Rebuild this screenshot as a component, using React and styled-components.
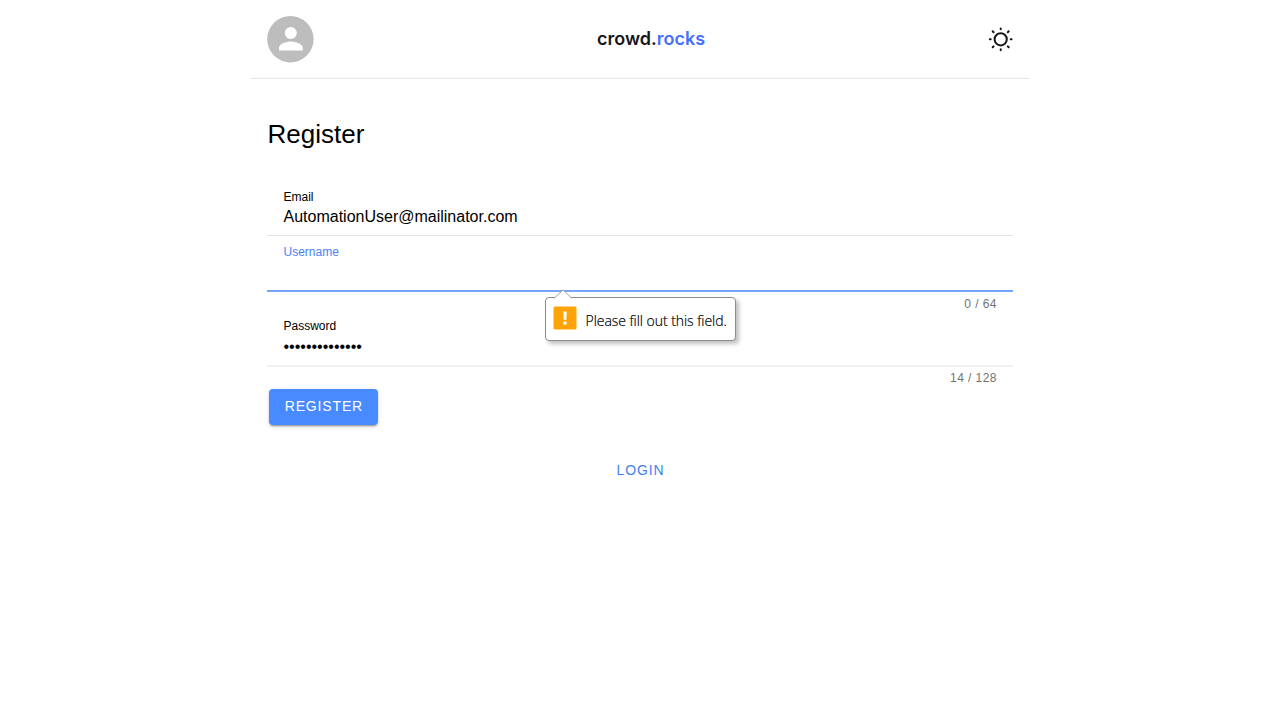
import React from 'react';
import styled, { createGlobalStyle } from 'styled-components';

const GlobalStyle = createGlobalStyle`
  *, *::before, *::after { box-sizing: border-box; }
  body {
    margin: 0;
    background: #fff;
    color: #000;
    font-family: "Liberation Sans", Arial, sans-serif;
  }
`;

const Page = styled.div`
  width: 778px;
  margin: 0 auto;
`;

const Header = styled.header`
  display: flex;
  align-items: center;
  justify-content: space-between;
  height: 79px;
  padding: 0 16px;
  border-bottom: 1px solid #e6e6ea;
`;

const Avatar = styled.svg`
  display: block;
  width: 47px;
  height: 47px;
`;

const Logo = styled.div`
  margin-left: -22px;
  padding-left: 22px;
  font: 600 18px/24px Inter, sans-serif;
  color: #16161a;
`;

const LogoAccent = styled.span`
  color: #476fff;
`;

const Sun = styled.svg`
  display: block;
  width: 25px;
  height: 25px;
`;

const Form = styled.main`
  display: flex;
  flex-direction: column;
  padding: 40px 16px 0;
`;

const Title = styled.h1`
  margin: 0 0 36px;
  padding-left: 0.6px;
  font-size: 26px;
  line-height: 30px;
  font-weight: 400;
`;

const borders = {
  normal: '1px solid #e4e4e4',
  soft: '2px solid #f1f1f1',
  focused: '2px solid #76a5fd',
};

const Field = styled.div`
  position: relative;
  height: ${(p) => p.$height}px;
  padding: ${(p) => p.$top}px 16px 0 16.5px;
  border-bottom: ${(p) => borders[p.$border || 'normal']};
`;

const Label = styled.div`
  font-size: 12px;
  line-height: 14px;
  color: ${(p) => (p.$focused ? '#4a80fb' : '#000')};
`;

const Value = styled.div`
  margin-top: ${(p) => p.$gap}px;
  font-size: 16px;
  line-height: 18px;
`;

const Counter = styled.div`
  height: ${(p) => p.$height}px;
  padding: ${(p) => p.$height - 14}px 16px 0;
  font-size: 12px;
  line-height: 14px;
  letter-spacing: 0.45px;
  text-align: right;
  color: #737373;
`;

const Tooltip = styled.div`
  position: absolute;
  z-index: 1;
  top: 61px;
  left: 278px;
  display: flex;
  align-items: center;
  width: 191px;
  height: 44px;
  padding: 0 7px;
  border: 1px solid #8c8c8c;
  border-radius: 4px;
  background: #fff;
  box-shadow: 3px 3px 4px rgba(0, 0, 0, 0.25);
`;

const TooltipArrow = styled.svg`
  position: absolute;
  top: -9px;
  left: 8px;
  width: 18px;
  height: 10px;
`;

const WarningIcon = styled.svg`
  flex: none;
  width: 24px;
  height: 24px;
  margin: -2px 8.5px 0 0;
`;

const TooltipText = styled.span`
  padding-top: 3px;
  font: 300 14px/20px "Open Sans", sans-serif;
  letter-spacing: -0.05px;
  white-space: nowrap;
  color: #000;
  -webkit-text-stroke: 0.2px #000;
`;

const RegisterButton = styled.button`
  align-self: flex-start;
  width: 109px;
  height: 36px;
  margin: 4px 2.4px;
  padding: 0 0 2px;
  border: 0;
  border-radius: 4px;
  background: #488aff;
  box-shadow: 0 3px 1px -2px rgba(0, 0, 0, 0.2), 0 2px 2px 0 rgba(0, 0, 0, 0.14), 0 1px 5px 0 rgba(0, 0, 0, 0.12);
  color: #fff;
  font: 400 14px/16px "Liberation Sans", Arial, sans-serif;
  letter-spacing: 0.84px;
`;

const LoginButton = styled.button`
  align-self: center;
  height: 36px;
  margin-top: 23px;
  padding: 0 15px 0 16px;
  border: 0;
  background: none;
  color: #4280f5;
  font: 400 14px/16px "Liberation Sans", Arial, sans-serif;
  letter-spacing: 0.84px;
`;

function ValidationTooltip({ children }) {
  return (
    <Tooltip role="alert">
      <TooltipArrow viewBox="0 0 18 10">
        <path d="M0.5 9 L9 0.9 L17.5 9 V10 H0.5 Z" fill="#fff" />
        <path d="M0.5 9 L9 0.9 L17.5 9" fill="none" stroke="#a0a0a0" />
      </TooltipArrow>
      <WarningIcon viewBox="0 0 24 24">
        <rect x="0.5" y="0.5" width="23" height="23" rx="1.5" fill="#ffa30a" />
        <path d="M10.3 5.5h3.4l-.3 8.2h-2.8z" fill="#fff" />
        <circle cx="12" cy="17.1" r="1.8" fill="#fff" />
      </WarningIcon>
      <TooltipText>{children}</TooltipText>
    </Tooltip>
  );
}

export default function App() {
  return (
    <>
      <GlobalStyle />
      <Page>
        <Header>
          <Avatar viewBox="0 0 47 47">
            <circle cx="23.4" cy="23.2" r="23.2" fill="#bdbdbd" />
            <circle cx="23.8" cy="17" r="6" fill="#fff" />
            <path d="M12 34.6v-3c0-4 7.8-6.2 11.8-6.2s11.9 2.2 11.9 6.2v3z" fill="#fff" />
          </Avatar>
          <Logo>crowd.<LogoAccent>rocks</LogoAccent></Logo>
          <Sun viewBox="0 0 25 25" fill="none" stroke="#161616" strokeWidth="2" strokeLinecap="round">
            <circle cx="12.7" cy="12.3" r="6.1" />
            <path d="M12.7 1.4v.9M12.7 22.3v.9M1.8 12.3h.9M22.7 12.3h.9M4.7 4.3l.9.9M19.8 19.4l.9.9M4.7 20.3l.9-.9M19.8 5.2l.9-.9" />
          </Sun>
        </Header>
        <Form>
          <Title>Register</Title>
          <Field $height={51} $top={5}>
            <Label>Email</Label>
            <Value $gap={4}>AutomationUser@mailinator.com</Value>
          </Field>
          <Field $height={56} $top={9} $border="focused">
            <Label $focused>Username</Label>
            <ValidationTooltip>Please fill out this field.</ValidationTooltip>
          </Field>
          <Counter $height={19}>0 / 64</Counter>
          <Field $height={56} $top={8} $border="soft">
            <Label>Password</Label>
            <Value $gap={5}>••••••••••••••</Value>
          </Field>
          <Counter $height={18}>14 / 128</Counter>
          <RegisterButton>REGISTER</RegisterButton>
          <LoginButton>LOGIN</LoginButton>
        </Form>
      </Page>
    </>
  );
}
